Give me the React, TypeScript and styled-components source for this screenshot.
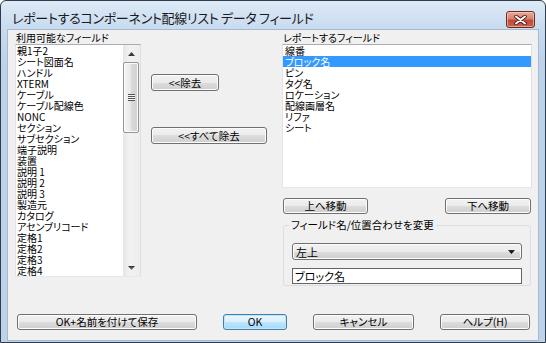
import React from 'react';
import styled, { createGlobalStyle } from 'styled-components';

const Global = createGlobalStyle`
  html, body { margin: 0; padding: 0; background: #ffffff; }
  * { box-sizing: border-box; }
`;

const uiFont = `"Noto Sans CJK JP", "Noto Sans", sans-serif`;

const Window = styled.div`
  width: 546px;
  height: 343px;
  display: flex;
  flex-direction: column;
  border: 1px solid #2e3c4e;
  border-radius: 6px 6px 0 0;
  background: linear-gradient(#dde9f6 0px, #c9dcf0 26px, #bcd3ea 60px, #bcd3ea 100%);
  padding: 0 6px 1px 6px;
  overflow: hidden;
  font-family: ${uiFont};
  font-feature-settings: "palt";
  color: #000;
`;

const TitleBar = styled.div`
  height: 28px;
  flex: none;
  display: flex;
  align-items: flex-end;
  padding: 0 4px 1px 5px;
`;

const TitleText = styled.div`
  font-size: 13px;
  line-height: 16px;
  margin-bottom: 2px;
  color: #1a1a1a;
  white-space: pre;
  letter-spacing: -0.3px;
`;

const CloseButton = styled.div`
  margin-left: auto;
  width: 29px;
  height: 17px;
  border: 1px solid #6b2a22;
  border-radius: 3px;
  background: linear-gradient(#e9a896 0%, #d88270 45%, #c24a38 55%, #c9604c 100%);
  box-shadow: inset 0 0 0 1px rgba(255, 220, 210, 0.55);
  display: flex;
  align-items: center;
  justify-content: center;
`;

const Client = styled.div`
  flex: 1;
  background: #f0f0f0;
  border: 1px solid #a6b9cf;
  padding: 2px 6px 0 7px;
  display: flex;
  flex-direction: column;
`;

const TopArea = styled.div`
  display: flex;
  align-items: flex-start;
`;

const Column = styled.div<{ $width: number; $gap?: number }>`
  width: ${(p) => p.$width}px;
  margin-left: ${(p) => p.$gap ?? 0}px;
  display: flex;
  flex-direction: column;
  flex: none;
`;

const MiddleColumn = styled(Column)`
  padding-top: 42px;
  align-items: stretch;
`;

const Label = styled.div`
  font-size: 10px;
  line-height: 12px;
  height: 12px;
  white-space: nowrap;
  padding-left: 1px;
`;

const ListBox = styled.div<{ $height: number }>`
  height: ${(p) => p.$height}px;
  background: #ffffff;
  border: 1px solid;
  border-color: #abadb3 #dbdfe6 #e3e9ef #e2e3ea;
  display: flex;
  overflow: hidden;
`;

const Items = styled.div<{ $pad: number }>`
  flex: 1;
  display: flex;
  flex-direction: column;
  overflow: hidden;
  --pad: ${(p) => p.$pad}px;
`;

const Item = styled.div<{ $selected?: boolean }>`
  height: 11px;
  line-height: 11px;
  font-size: 10px;
  padding-left: var(--pad);
  white-space: nowrap;
  background: ${(p) => (p.$selected ? '#3399ff' : 'transparent')};
  color: ${(p) => (p.$selected ? '#ffffff' : '#000000')};
`;

const ScrollBar = styled.div`
  width: 17px;
  flex: none;
  display: flex;
  flex-direction: column;
  background: linear-gradient(to right, #e6e6e6, #f2f2f2 40%, #ededed);
`;

const ScrollArrow = styled.div`
  height: 17px;
  flex: none;
  display: flex;
  align-items: center;
  justify-content: center;
`;

const ScrollTrack = styled.div`
  flex: 1;
`;

const Thumb = styled.div`
  height: 71px;
  margin: 0 1px 0 0;
  border: 1px solid #959595;
  border-radius: 2px;
  background: linear-gradient(to right, #f5f5f5, #e9e9e9 45%, #d9d9d9 55%, #d2d2d2);
  box-shadow: inset 0 0 0 1px #fbfbfb;
  display: flex;
  align-items: center;
  justify-content: center;
`;

const Grip = styled.div`
  width: 7px;
  height: 7px;
  background: repeating-linear-gradient(#555 0px, #555 1px, #f4f4f4 1px, #f4f4f4 2px);
`;

const Button = styled.div<{ $width?: number; $height?: number; $default?: boolean }>`
  width: ${(p) => (p.$width ? `${p.$width}px` : 'auto')};
  height: ${(p) => p.$height ?? 17}px;
  flex: none;
  border: 1px solid ${(p) => (p.$default ? '#3c7fb1' : '#707070')};
  border-radius: 3px;
  background: ${(p) =>
    p.$default
      ? 'linear-gradient(#eaf6fd 0%, #d9f0fc 50%, #bee6fd 50%, #a7d9f5 100%)'
      : 'linear-gradient(#f2f2f2 0%, #ebebeb 50%, #dddddd 50%, #cfcfcf 100%)'};
  box-shadow: inset 0 0 0 1px ${(p) => (p.$default ? '#c4e5f6' : '#fcfcfc')};
  display: flex;
  align-items: center;
  justify-content: center;
  font-size: 10.5px;
  line-height: 12px;
  white-space: pre;
`;

const MoveRow = styled.div`
  display: flex;
  justify-content: space-between;
  margin-top: 10px;
  padding: 0 1px;
`;

const Group = styled.fieldset`
  margin: 5px 1px 0 1px;
  border: 1px solid #d5dfe5;
  border-radius: 3px;
  padding: 0 8px 1px 8px;
  min-inline-size: 0;
  display: flex;
  flex-direction: column;
`;

const Legend = styled.legend`
  font-size: 10.5px;
  line-height: 12px;
  padding: 0 2px;
  margin-left: -3px;
  white-space: nowrap;
`;

const Select = styled.div`
  margin-top: 12px;
  height: 17px;
  border: 1px solid #707070;
  border-radius: 3px;
  background: linear-gradient(#f2f2f2 0%, #ebebeb 50%, #dddddd 50%, #cfcfcf 100%);
  box-shadow: inset 0 0 0 1px #fcfcfc;
  display: flex;
  align-items: center;
  justify-content: space-between;
  padding: 0 6px 0 3px;
  font-size: 11px;
  line-height: 12px;
`;

const TextBox = styled.div`
  margin-top: 8px;
  height: 16px;
  border: 1px solid #646464;
  background: #ffffff;
  padding-left: 2px;
  font-size: 11px;
  line-height: 14px;
  white-space: nowrap;
`;

const BottomRow = styled.div`
  display: flex;
  justify-content: space-between;
  margin-top: 28px;
  padding: 0 2px;
`;

const leftItems = [
  '親1子2',
  'シート図面名',
  'ハンドル',
  'XTERM',
  'ケーブル',
  'ケーブル配線色',
  'NONC',
  'セクション',
  'サブセクション',
  '端子説明',
  '装置',
  '説明 1',
  '説明 2',
  '説明 3',
  '製造元',
  'カタログ',
  'アセンブリコード',
  '定格1',
  '定格2',
  '定格3',
  '定格4',
];

const rightItems = ['線番', 'ブロック名', 'ピン', 'タグ名', 'ロケーション', '配線画層名', 'リファ', 'シート'];

const UpTriangle = () => (
  <svg width="7" height="4" viewBox="0 0 7 4">
    <path d="M3.5 0 L7 4 L0 4 Z" fill="#3a3a3a" />
  </svg>
);

const DownTriangle = ({ id, color = '#4a4a4a' }: { id: string; color?: string }) => (
  <svg width="7" height="4" viewBox="0 0 7 4">
    <defs>
      <linearGradient id={id} x1="0" y1="0" x2="0" y2="1">
        <stop offset="0" stopColor="#2b2b2b" />
        <stop offset="1" stopColor={color} />
      </linearGradient>
    </defs>
    <path d="M0 0 L7 0 L3.5 4 Z" fill={`url(#${id})`} />
  </svg>
);

const CloseGlyph = () => (
  <svg width="13" height="10" viewBox="0 0 13 10">
    <path d="M2 1.5 L11 8.5 M11 1.5 L2 8.5" stroke="#4a1712" strokeWidth="3.6" strokeLinecap="round" />
    <path d="M2 1.5 L11 8.5 M11 1.5 L2 8.5" stroke="#ffffff" strokeWidth="2" strokeLinecap="round" />
  </svg>
);

export default function App() {
  return (
    <>
      <Global />
      <Window>
        <TitleBar>
          <TitleText>レポートするコンポーネント配線リスト データ フィールド</TitleText>
          <CloseButton>
            <CloseGlyph />
          </CloseButton>
        </TitleBar>
        <Client>
          <TopArea>
            <Column $width={126}>
              <Label>利用可能なフィールド</Label>
              <ListBox $height={233}>
                <Items $pad={1}>
                  {leftItems.map((t) => (
                    <Item key={t}>{t}</Item>
                  ))}
                </Items>
                <ScrollBar>
                  <ScrollArrow>
                    <UpTriangle />
                  </ScrollArrow>
                  <Thumb>
                    <Grip />
                  </Thumb>
                  <ScrollTrack />
                  <ScrollArrow>
                    <DownTriangle id="sbdown" color="#8a8a8a" />
                  </ScrollArrow>
                </ScrollBar>
              </ListBox>
            </Column>
            <MiddleColumn $width={116} $gap={10}>
              <Button $width={68}>{'<<除去'}</Button>
              <Button style={{ marginTop: 36 }}>{'<<すべて除去'}</Button>
            </MiddleColumn>
            <Column $width={250} $gap={15}>
              <Label>レポートするフィールド</Label>
              <ListBox $height={144}>
                <Items $pad={2}>
                  {rightItems.map((t, i) => (
                    <Item key={t} $selected={i === 1}>
                      {t}
                    </Item>
                  ))}
                </Items>
              </ListBox>
              <MoveRow>
                <Button $width={85} $height={16}>上へ移動</Button>
                <Button $width={86} $height={16}>下へ移動</Button>
              </MoveRow>
              <Group>
                <Legend>フィールド名/位置合わせを変更</Legend>
                <Select>
                  <span>左上</span>
                  <DownTriangle id="seldown" color="#000000" />
                </Select>
                <TextBox>ブロック名</TextBox>
              </Group>
            </Column>
          </TopArea>
          <BottomRow>
            <Button $width={180} $height={16}>OK+名前を付けて保存</Button>
            <Button $width={64} $height={16} $default>
              OK
            </Button>
            <Button $width={101} $height={16}>キャンセル</Button>
            <Button $width={90} $height={16}>ヘルプ(H)</Button>
          </BottomRow>
        </Client>
      </Window>
    </>
  );
}
